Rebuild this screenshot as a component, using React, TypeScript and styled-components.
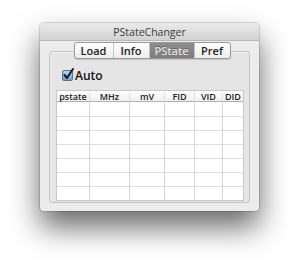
import React from 'react';
import styled, { createGlobalStyle } from 'styled-components';

const Global = createGlobalStyle`
  html, body { margin: 0; padding: 0; background: #ffffff; }
  body { width: 300px; height: 269px; overflow: hidden; font-family: "Open Sans", "DejaVu Sans", sans-serif; }
`;

const Page = styled.div`
  width: 300px;
  height: 269px;
  padding: 23px 0 0 40px;
  box-sizing: border-box;
`;

const Window = styled.div`
  width: 219px;
  height: 188px;
  background: #ececec;
  border-radius: 4px;
  box-shadow: 0 16px 30px rgba(0, 0, 0, 0.6), 0 0 0 1px rgba(0, 0, 0, 0.14);
  display: flex;
  flex-direction: column;
  overflow: hidden;
`;

const TitleBar = styled.div`
  height: 17px;
  background: linear-gradient(#ebebeb, #d2d2d2);
  border-bottom: 1px solid #b8b8b8;
  display: flex;
  align-items: center;
  justify-content: center;
  font-size: 10.5px;
  color: #3a3a3a;
`;

const Content = styled.div`
  padding: 1px 9px 0 9px;
  display: flex;
  flex-direction: column;
`;

const Tabs = styled.div`
  align-self: center;
  margin-left: 5px;
  display: flex;
  height: 15px;
  margin-bottom: -8px;
  position: relative;
  z-index: 1;
  border: 1px solid #9a9a9a;
  border-radius: 3px;
  background: linear-gradient(#ffffff, #ededed);
  box-shadow: 0 1px 1px rgba(0, 0, 0, 0.15);
  overflow: hidden;
`;

const Tab = styled.div<{ $active?: boolean; $w: number }>`
  width: ${p => p.$w}px;
  display: flex;
  align-items: center;
  justify-content: center;
  font-size: 11px;
  font-weight: 600;
  color: ${p => (p.$active ? '#e2e2e2' : '#222')};
  background: ${p => (p.$active ? 'linear-gradient(#8e8e8e, #7e7e7e)' : 'transparent')};
  text-shadow: ${p => (p.$active ? '0 -1px 0 rgba(0,0,0,0.3)' : 'none')};
  & + & { border-left: 1px solid #c4c4c4; }
`;

const Group = styled.div`
  height: 152px;
  border: 1px solid #c4c4c4;
  border-radius: 3px;
  background: #e5e5e5;
  box-shadow: inset 0 1px 0 #f4f4f4;
  padding: 11px 5px 3px 6px;
  display: flex;
  flex-direction: column;
  box-sizing: border-box;
`;

const CheckRow = styled.label`
  display: flex;
  align-items: center;
  gap: 2px;
  margin: 7px 0 0 6px;
  font-size: 12px;
  font-weight: 600;
  color: #111;
  height: 11px;
`;

const Check = styled.span`
  width: 9px;
  height: 9px;
  border: 1px solid #5a6f8c;
  border-radius: 2px;
  background: linear-gradient(#b9d3f3, #6f9fd8);
  position: relative;
  display: inline-block;
  svg { position: absolute; left: 0; top: -3px; }
`;

const Table = styled.div`
  margin-top: 9px;
  background: #ffffff;
  border: 1px solid #c8c8c8;
  display: grid;
  grid-template-columns: 32px 40px 35px 30px 28px 1fr;
  grid-template-rows: 11px repeat(7, 14px);
`;

const Head = styled.div`
  font-size: 9px;
  font-weight: 600;
  color: #222;
  display: flex;
  align-items: center;
  justify-content: center;
  border-bottom: 1px solid #b0b0b0;
  border-left: 1px solid #e0e0e0;
  background: linear-gradient(#ffffff, #f0f0f0);
  &:first-child { border-left: none; }
`;

const Cell = styled.div<{ $first?: boolean }>`
  border-top: 1px solid #dedede;
  border-left: ${p => (p.$first ? 'none' : '1px solid #d6d6d6')};
  &:nth-child(-n+12) { border-top: none; }
`;

const cols = ['pstate', 'MHz', 'mV', 'FID', 'VID', 'DID'];

export default function App() {
  return (
    <Page>
      <Global />
      <Window>
        <TitleBar>PStateChanger</TitleBar>
        <Content>
          <Tabs>
            <Tab $w={38}>Load</Tab>
            <Tab $w={35}>Info</Tab>
            <Tab $w={44} $active>PState</Tab>
            <Tab $w={35}>Pref</Tab>
          </Tabs>
          <Group>
            <CheckRow>
              <Check>
                <svg width="11" height="12" viewBox="0 0 11 12">
                  <path d="M1.5 7 L4 10 L10 1" fill="none" stroke="#1a1a1a" strokeWidth="2" strokeLinecap="round" strokeLinejoin="round" />
                </svg>
              </Check>
              Auto
            </CheckRow>
            <Table>
              {cols.map(c => <Head key={c}>{c}</Head>)}
              {Array.from({ length: 7 * 6 }, (_, i) => (
                <Cell key={i} $first={i % 6 === 0} />
              ))}
            </Table>
          </Group>
        </Content>
      </Window>
    </Page>
  );
}
